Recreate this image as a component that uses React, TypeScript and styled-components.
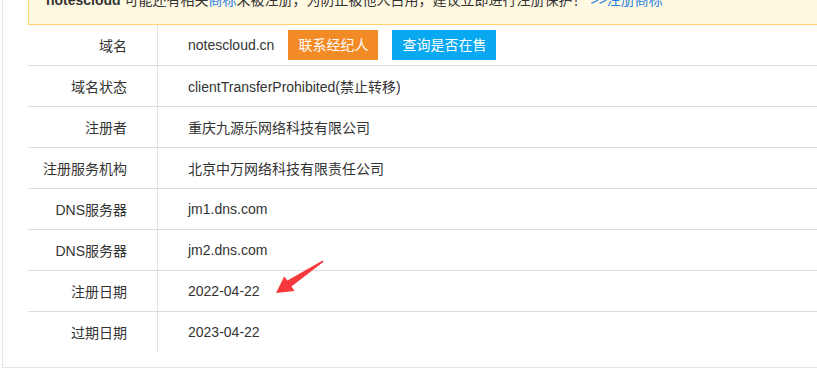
import React from 'react';
import styled, { createGlobalStyle } from 'styled-components';

const GlobalStyle = createGlobalStyle`
  html, body {
    margin: 0;
    padding: 0;
    background: #fff;
    overflow: hidden;
  }
  body {
    font-family: "Liberation Sans", "Noto Sans CJK SC", Arial, sans-serif;
    font-size: 14px;
    color: #333;
  }
`;

const Page = styled.div`
  position: relative;
  padding-left: 2px;
  margin-top: -21px;
  width: 960px;
`;

const Panel = styled.div`
  border-left: 1px solid #e4e4e4;
  border-bottom: 1px solid #e4e4e4;
  padding: 0 0 15px 25px;
`;

const Notice = styled.div`
  background: #fff9e2;
  border: 1px solid #fdd36c;
  padding: 10px 17px 14px;
  line-height: 20px;
  white-space: nowrap;
`;

const Strong = styled.b`
  color: #333;
`;

const Link = styled.a`
  color: #2a7fe4;
  text-decoration: none;
`;

const InfoTable = styled.div`
  display: flex;
  flex-direction: column;
`;

const Row = styled.div<{ $last?: boolean }>`
  display: flex;
  height: 40px;
  border-bottom: ${(p) => (p.$last ? 'none' : '1px solid #dedede')};
`;

const Label = styled.div`
  width: 130px;
  flex-shrink: 0;
  box-sizing: border-box;
  padding-right: 30px;
  border-right: 1px solid #e2e2e2;
  display: flex;
  align-items: center;
  justify-content: flex-end;
`;

const Value = styled.div`
  flex: 1;
  padding-left: 30px;
  display: flex;
  align-items: center;
`;

const Button = styled.span<{ $color: string }>`
  display: inline-block;
  margin-left: 14px;
  height: 30px;
  line-height: 30px;
  padding: 0 10px;
  color: #fff;
  background: ${(p) => p.$color};
  cursor: pointer;
`;

const Arrow = styled.svg`
  position: absolute;
  left: 270px;
  top: 276px;
`;

const rows: [string, string][] = [
  ['域名状态', 'clientTransferProhibited(禁止转移)'],
  ['注册者', '重庆九源乐网络科技有限公司'],
  ['注册服务机构', '北京中万网络科技有限责任公司'],
  ['DNS服务器', 'jm1.dns.com'],
  ['DNS服务器', 'jm2.dns.com'],
  ['注册日期', '2022-04-22'],
  ['过期日期', '2023-04-22'],
];

export default function App() {
  return (
    <>
      <GlobalStyle />
      <Page>
        <Panel>
          <Notice>
            <Strong>notescloud</Strong> 可能还有相关<Link href="#">商标</Link>
            未被注册，为防止被他人占用，建议立即进行注册保护！ <Link href="#">&gt;&gt;注册商标</Link>
          </Notice>
          <InfoTable>
            <Row>
              <Label>域名</Label>
              <Value>
                notescloud.cn
                <Button $color="#f28a25">联系经纪人</Button>
                <Button $color="#08a9f0">查询是否在售</Button>
              </Value>
            </Row>
            {rows.map(([label, value], i) => (
              <Row key={i} $last={i === rows.length - 1}>
                <Label>{label}</Label>
                <Value>{value}</Value>
              </Row>
            ))}
          </InfoTable>
        </Panel>
        <Arrow width="60" height="45" viewBox="0 0 60 45">
          <polygon
            points="6,38 14.2,21.6 17.4,25.6 52.6,5.4 53.6,6.8 21.4,31.6 24.6,36"
            fill="#f5393c"
          />
        </Arrow>
      </Page>
    </>
  );
}
